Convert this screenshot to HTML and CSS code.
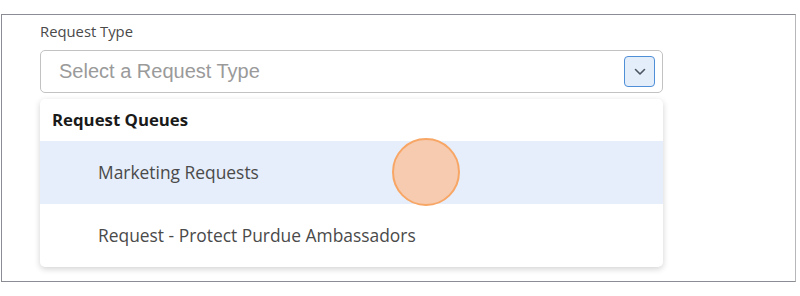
FILE: index.html
```html
<!DOCTYPE html>
<html lang="en">
<head>
    <meta charset="UTF-8">
    <meta name="viewport" content="width=device-width, initial-scale=1.0">
    <title>Request Type</title>
    <link rel="stylesheet" href="styles.css">
</head>
<body>
    <div class="frame">
        <div class="field">
            <label class="field-label" for="requestType">Request Type</label>
            <div class="select-box" id="requestType">
                <span class="placeholder">Select a Request Type</span>
                <span class="chevron-btn">
                    <svg width="12" height="8" viewBox="0 0 12 8">
                        <path d="M1.5 1.5 L6 6 L10.5 1.5" fill="none" stroke="#4b5563" stroke-width="1.6" stroke-linecap="round" stroke-linejoin="round"/>
                    </svg>
                </span>
            </div>
            <div class="dropdown">
                <div class="group-title">Request Queues</div>
                <div class="option active">
                    Marketing Requests
                    <span class="tap"></span>
                </div>
                <div class="option">Request - Protect Purdue Ambassadors</div>
            </div>
        </div>
    </div>
</body>
</html>
```

FILE: styles.css
```css
body {
    margin: 0;
    background: #fff;
    font-family: "Open Sans", "Noto Sans", sans-serif;
}
.frame {
    margin: 14px 4px 0 1px;
    height: 268px;
    border: 1.5px solid #8a8d93;
    border-right-color: #b5b7ba;
    box-sizing: border-box;
    padding: 6px 0 0 38px;
}
.field {
    width: 623px;
}
.field-label {
    display: block;
    font-size: 14.8px;
    color: #4a4a4a;
    line-height: 20px;
    margin-bottom: 9px;
}
.select-box {
    height: 43px;
    border: 1.5px solid #c2c2c2;
    border-radius: 5px;
    box-sizing: border-box;
    display: flex;
    align-items: center;
    justify-content: space-between;
    padding: 0 7px 0 18px;
}
.placeholder {
    font-family: "Liberation Sans", Arial, sans-serif;
    font-size: 20px;
    color: #9a9a9a;
}
.chevron-btn {
    width: 31px;
    height: 31px;
    box-sizing: border-box;
    border: 1.5px solid #4f8fd8;
    border-radius: 4px;
    background: #e4eefb;
    display: flex;
    align-items: center;
    justify-content: center;
}
.dropdown {
    margin-top: 6px;
    background: #fff;
    border-radius: 5px;
    box-shadow: 0 2px 6px rgba(0, 0, 0, 0.18);
    overflow: hidden;
}
.group-title {
    height: 42px;
    line-height: 42px;
    padding-left: 12px;
    font-size: 16.8px;
    font-weight: 700;
    color: #1a1a1a;
}
.option {
    position: relative;
    height: 63px;
    line-height: 63px;
    padding-left: 58px;
    font-size: 17.4px;
    color: #4a4a4a;
}
.option.active {
    background: #e6eefb;
}
.tap {
    position: absolute;
    left: 352px;
    top: -3px;
    width: 68px;
    height: 68px;
    box-sizing: border-box;
    border-radius: 50%;
    border: 2.5px solid #f8a665;
    background: #f6cbb0;
}
```
